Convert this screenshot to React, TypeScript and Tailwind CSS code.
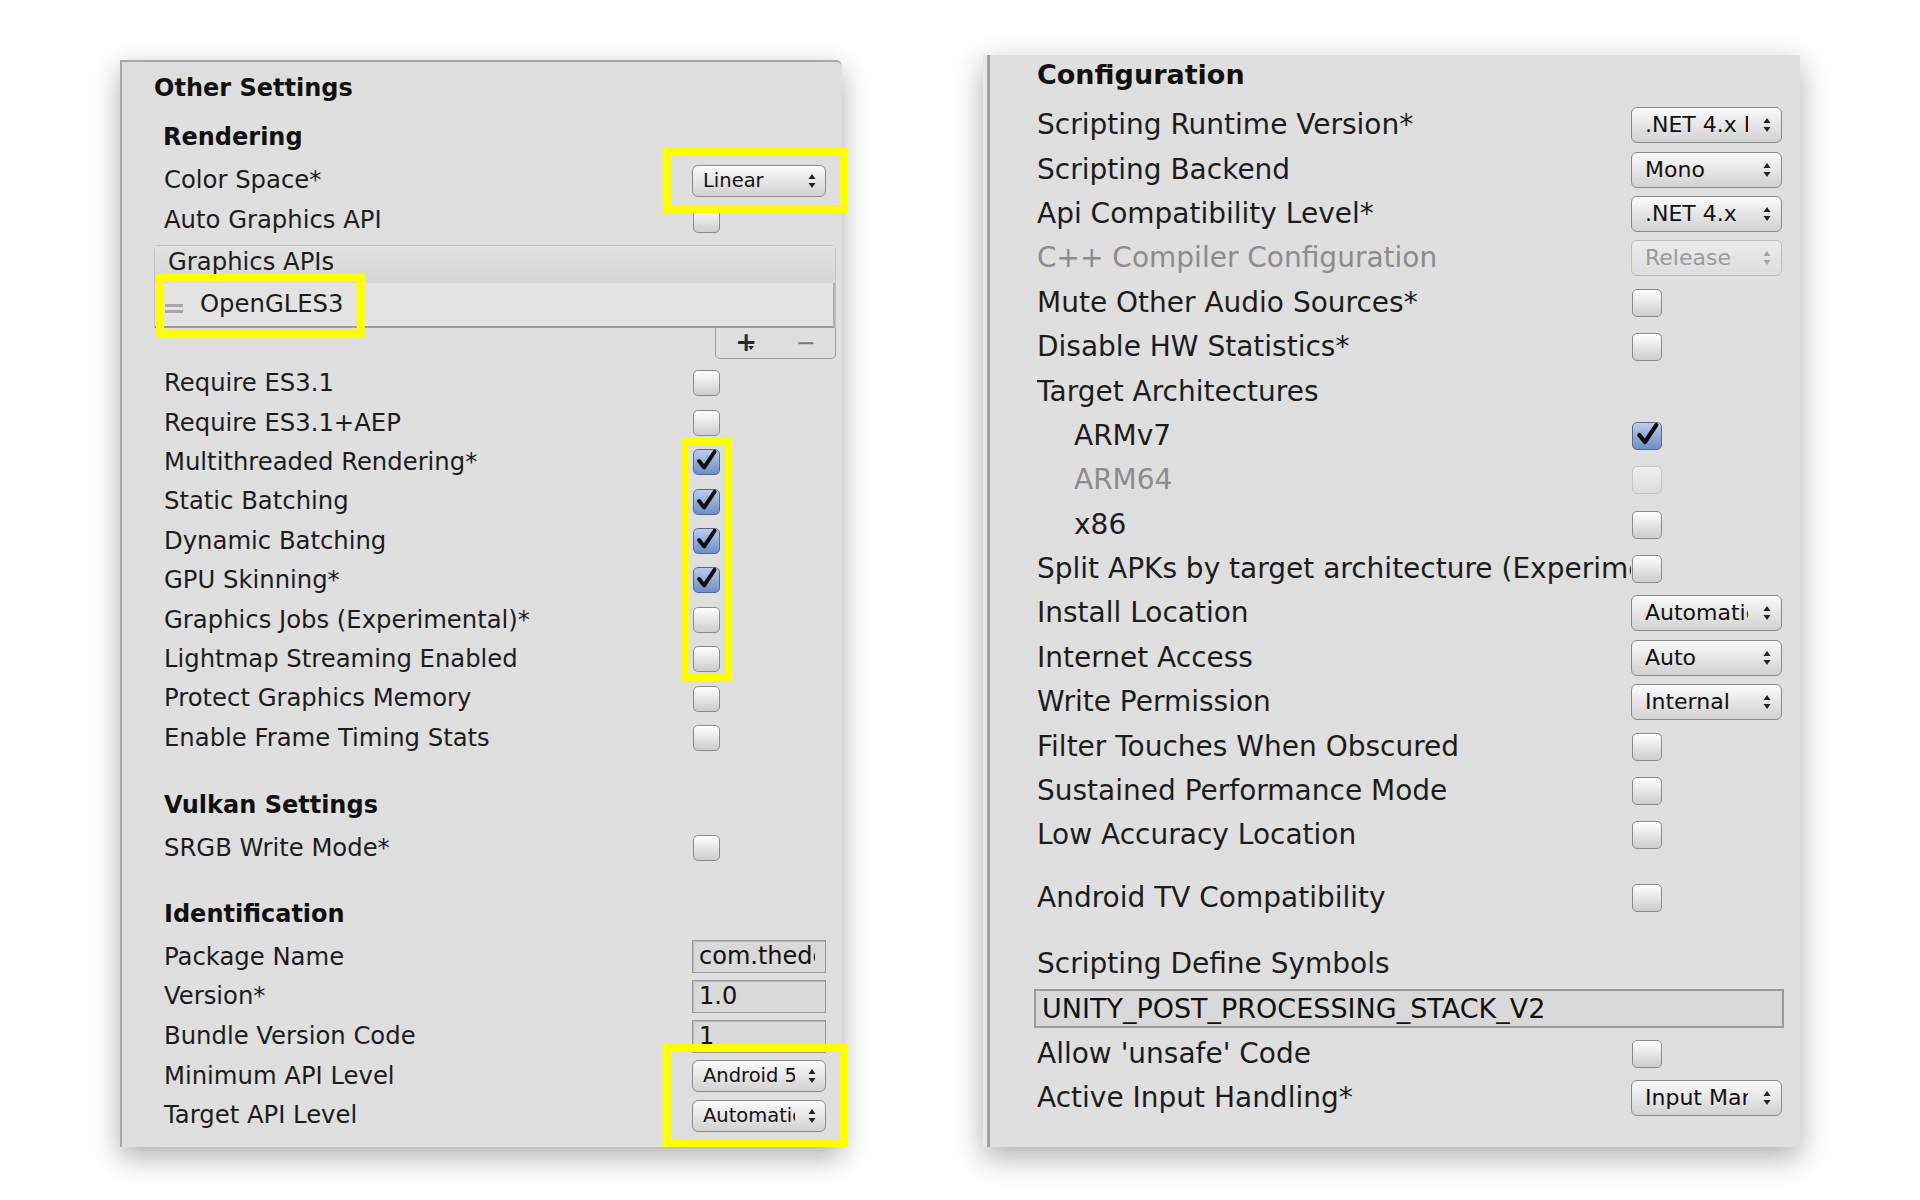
import React from "react"

type Kind = "check" | "checked" | "off" | "drop" | "field" | "none"

type Row = {
  label: string
  kind: Kind
  value?: string
  disabled?: boolean
  indent?: boolean
}

const Arrows = ({ dim }: { dim?: boolean }) => (
  <svg width="8" height="14" viewBox="0 0 8 14" className="shrink-0">
    <path d="M4 0 L7.5 5 L0.5 5 Z" fill={dim ? "#a5a5a5" : "#222"} />
    <path d="M4 14 L7.5 9 L0.5 9 Z" fill={dim ? "#a5a5a5" : "#222"} />
  </svg>
)

const Check = ({ size }: { size: "sm" | "lg" }) => (
  <svg viewBox="0 0 20 20" className={size === "sm" ? "w-[23px] h-[23px] -mt-[3px]" : "w-[25px] h-[25px] -mt-[3px]"}>
    <path d="M3.5 10.5 L8 16 L17 2.5" fill="none" stroke="#0d0d0d" strokeWidth="3.4" strokeLinecap="round" strokeLinejoin="round" />
  </svg>
)

const Checkbox = ({ state, size }: { state: "check" | "checked" | "off"; size: "sm" | "lg" }) => {
  const dims = size === "sm" ? "w-[27px] h-[26px]" : "w-[30px] h-[28px]"
  if (state === "checked") {
    return (
      <div className={`${dims} ml-[1px] rounded-[5px] border border-[#56698c] bg-gradient-to-b from-[#bccdeb] to-[#6e8ec5] flex items-center justify-center`}>
        <Check size={size} />
      </div>
    )
  }
  if (state === "off") {
    return <div className={`${dims} ml-[1px] rounded-[5px] border border-[#c4c4c4] bg-gradient-to-b from-[#f0f0f0] to-[#dcdcdc]`} />
  }
  return <div className={`${dims} ml-[1px] rounded-[5px] border border-[#8a8a8a] bg-gradient-to-b from-white to-[#cdcdcd]`} />
}

const Dropdown = ({ value, size, disabled }: { value: string; size: "sm" | "lg"; disabled?: boolean }) =>
  size === "sm" ? (
    <div className="w-[134px] h-[32px] rounded-[6px] border border-[#8a8a8a] bg-gradient-to-b from-[#fbfbfb] to-[#d2d2d2] flex items-center pl-[10px] text-[19.5px] text-[#111]">
      <span className="w-[92px] overflow-hidden whitespace-nowrap leading-none">{value}</span>
      <span className="flex-1" />
      <span className="mr-[9px] flex">
        <Arrows />
      </span>
    </div>
  ) : (
    <div
      className={`w-[151px] h-[36px] rounded-[6px] border bg-gradient-to-b flex items-center pl-[13px] text-[22px] ${
        disabled ? "border-[#bdbdbd] text-[#9b9b9b] from-[#ececec] to-[#dedede]" : "border-[#8a8a8a] text-[#111] from-[#fbfbfb] to-[#d2d2d2]"
      }`}
    >
      <span className="w-[103px] overflow-hidden whitespace-nowrap leading-none">{value}</span>
      <span className="flex-1" />
      <span className="mr-[10px] flex">
        <Arrows dim={disabled} />
      </span>
    </div>
  )

const TextField = ({ value }: { value: string }) => (
  <div className="w-[134px] h-[33px] border border-[#9a9a9a] shadow-[inset_1px_1px_0_#b5b5b5] bg-[#d9d9d9] pl-[6px] pr-[10px] text-[24px] leading-[31px] text-[#111]">
    <div className="overflow-hidden whitespace-nowrap">{value}</div>
  </div>
)

const leftTop: Row[] = [
  { label: "Color Space*", kind: "drop", value: "Linear" },
  { label: "Auto Graphics API", kind: "check" },
]

const leftMid: Row[] = [
  { label: "Require ES3.1", kind: "check" },
  { label: "Require ES3.1+AEP", kind: "check" },
  { label: "Multithreaded Rendering*", kind: "checked" },
  { label: "Static Batching", kind: "checked" },
  { label: "Dynamic Batching", kind: "checked" },
  { label: "GPU Skinning*", kind: "checked" },
  { label: "Graphics Jobs (Experimental)*", kind: "check" },
  { label: "Lightmap Streaming Enabled", kind: "check" },
  { label: "Protect Graphics Memory", kind: "check" },
  { label: "Enable Frame Timing Stats", kind: "check" },
]

const leftIdent: Row[] = [
  { label: "Package Name", kind: "field", value: "com.thedeveloper" },
  { label: "Version*", kind: "field", value: "1.0" },
  { label: "Bundle Version Code", kind: "field", value: "1" },
  { label: "Minimum API Level", kind: "drop", value: "Android 5.1" },
  { label: "Target API Level", kind: "drop", value: "Automatic (highest installed)" },
]

const rightRows: Row[] = [
  { label: "Scripting Runtime Version*", kind: "drop", value: ".NET 4.x Equivalent" },
  { label: "Scripting Backend", kind: "drop", value: "Mono" },
  { label: "Api Compatibility Level*", kind: "drop", value: ".NET 4.x" },
  { label: "C++ Compiler Configuration", kind: "drop", value: "Release", disabled: true },
  { label: "Mute Other Audio Sources*", kind: "check" },
  { label: "Disable HW Statistics*", kind: "check" },
  { label: "Target Architectures", kind: "none" },
  { label: "ARMv7", kind: "checked", indent: true },
  { label: "ARM64", kind: "off", indent: true, disabled: true },
  { label: "x86", kind: "check", indent: true },
  { label: "Split APKs by target architecture (Experimental)", kind: "check" },
  { label: "Install Location", kind: "drop", value: "Automatic" },
  { label: "Internet Access", kind: "drop", value: "Auto" },
  { label: "Write Permission", kind: "drop", value: "Internal" },
  { label: "Filter Touches When Obscured", kind: "check" },
  { label: "Sustained Performance Mode", kind: "check" },
  { label: "Low Accuracy Location", kind: "check" },
]

const LeftRow = ({ row, h = "h-[39.4px]" }: { row: Row; h?: string }) => (
  <div className={`${h} flex items-center pl-[42px] pr-[16px]`}>
    <span className="flex-1 min-w-0 whitespace-nowrap text-[24.3px] text-[#1c1c1c]">{row.label}</span>
    <div className="w-[134px] flex items-center">
      {row.kind === "drop" && <Dropdown value={row.value ?? ""} size="sm" />}
      {row.kind === "field" && <TextField value={row.value ?? ""} />}
      {(row.kind === "check" || row.kind === "checked") && <Checkbox state={row.kind} size="sm" />}
    </div>
  </div>
)

const RightRow = ({ row }: { row: Row }) => (
  <div className="h-[44.4px] flex items-center pl-[47px] pr-[18px]">
    <span
      className={`flex-1 min-w-0 overflow-hidden whitespace-nowrap text-[28px] ${row.indent ? "pl-[37px]" : ""} ${row.disabled ? "text-[#8c8c8c]" : "text-[#1c1c1c]"}`}
    >
      {row.label}
    </span>
    <div className="w-[151px] shrink-0 flex items-center">
      {row.kind === "drop" && <Dropdown value={row.value ?? ""} size="lg" disabled={row.disabled} />}
      {row.kind !== "drop" && row.kind !== "none" && row.kind !== "field" && <Checkbox state={row.kind} size="lg" />}
    </div>
  </div>
)

const Heading = ({ text, size, className }: { text: string; size: string; className?: string }) => (
  <div className={`h-[40px] flex items-center font-bold text-[#111] ${size} ${className ?? ""}`}>{text}</div>
)

const LeftPanel = () => (
  <div className="ml-[120px] mt-[60px] w-[722px] h-[1087px] shrink-0 bg-[#dfdfdf] border-l-2 border-t-2 border-[#a9a9a9] rounded-tr-[6px] shadow-[0_10px_28px_rgba(0,0,0,0.32)] pt-[6px] flex flex-col">
    <Heading text="Other Settings" size="text-[24px]" className="pl-[32px]" />
    <Heading text="Rendering" size="text-[24px]" className="pl-[41px] mt-[9px]" />
    <div className="mt-[4px]">
      {leftTop.map((r) => (
        <LeftRow key={r.label} row={r} />
      ))}
    </div>

    {/* Graphics APIs reorderable list */}
    <div className="mt-[5px] ml-[32px] mr-[6px] flex flex-col">
      <div className="rounded-t-[5px] border border-[#c2c2c2] border-b-0 shadow-[inset_0_1px_0_#f4f4f4]">
        <div className="h-[37px] bg-gradient-to-b from-[#e2e2e2] to-[#d7d7d7] flex items-center pb-[5px] pl-[13px] text-[24.3px] text-[#1c1c1c]">
          Graphics APIs
        </div>
        <div className="h-[45px] bg-[#e3e3e3] flex items-center border-r-2 border-[#b0b0b0] border-b-2 border-b-[#9c9c9c]">
          <div className="ml-[10px] mt-[8px] w-[18px] flex flex-col gap-[3px]">
            <div className="h-[3px] bg-[#a8a8a8]" />
            <div className="h-[3px] bg-[#a8a8a8]" />
          </div>
          <span className="ml-[17px] text-[24.3px] text-[#1c1c1c]">OpenGLES3</span>
        </div>
      </div>
      <div className="self-end w-[121px] h-[31px] border border-t-0 border-[#9c9c9c] rounded-b-[5px] bg-[#dfdfdf] flex items-center justify-around text-[#2a2a2a]">
        <span className="relative text-[26px] font-bold leading-none -mt-[2px]">
          +
          <svg width="6" height="4" viewBox="0 0 6 4" className="absolute left-[13px] top-[17px]">
            <path d="M0 0 L6 0 L3 4 Z" fill="#2a2a2a" />
          </svg>
        </span>
        <span className="text-[24px] leading-none text-[#7a7a7a]">−</span>
      </div>
    </div>

    <div className="mt-[5px]">
      {leftMid.map((r) => (
        <LeftRow key={r.label} row={r} />
      ))}
    </div>

    <Heading text="Vulkan Settings" size="text-[24px]" className="pl-[42px] mt-[27px]" />
    <div className="mt-[4px]">
      <LeftRow row={{ label: "SRGB Write Mode*", kind: "check" }} />
    </div>

    <Heading text="Identification" size="text-[24px]" className="pl-[42px] mt-[26px]" />
    <div className="mt-[3px]">
      {leftIdent.map((r) => (
        <LeftRow key={r.label} row={r} h="h-[39.7px]" />
      ))}
    </div>
  </div>
)

const RightPanel = () => (
  <div className="ml-[141px] mt-[55px] w-[817px] h-[1092px] shrink-0 bg-[#dfdfdf] shadow-[0_10px_28px_rgba(0,0,0,0.32)] flex">
    <div className="w-[4px] shrink-0 bg-[#e8e8e8]" />
    <div className="w-[3px] shrink-0 bg-[#a2a2a2]" />
    <div className="flex-1 min-w-0 flex flex-col">
      <Heading text="Configuration" size="text-[27px]" className="pl-[47px]" />
      <div className="mt-[8px]">
        {rightRows.map((r) => (
          <RightRow key={r.label} row={r} />
        ))}
      </div>
      <div className="mt-[18px]">
        <RightRow row={{ label: "Android TV Compatibility", kind: "check" }} />
      </div>
      <div className="mt-[22px] h-[44.4px] flex items-center pl-[47px] text-[28px] text-[#1c1c1c]">Scripting Define Symbols</div>
      <div className="mt-[3px] ml-[44px] mr-[16px] h-[39px] border-2 border-[#9a9a9a] bg-[#d9d9d9] pl-[6px] flex items-center text-[27px] text-[#111] whitespace-nowrap overflow-hidden">
        UNITY_POST_PROCESSING_STACK_V2
      </div>
      <div className="mt-[3px]">
        <RightRow row={{ label: "Allow 'unsafe' Code", kind: "check" }} />
        <RightRow row={{ label: "Active Input Handling*", kind: "drop", value: "Input Manager" }} />
      </div>
    </div>
  </div>
)

export default function App() {
  return (
    <div className="relative w-[1920px] h-[1200px] bg-white flex items-start overflow-hidden font-['DejaVu_Sans',sans-serif]">
      <LeftPanel />
      <RightPanel />

      {/* yellow highlight frames drawn over the panels */}
      <div className="absolute left-[663px] top-[148px] w-[185px] h-[65px] border-[8px] border-[#ffff00]" />
      <div className="absolute left-[156px] top-[274px] w-[209px] h-[63px] border-[8px] border-[#ffff00]" />
      <div className="absolute left-[682px] top-[438px] w-[50px] h-[243px] border-[7px] border-[#ffff00]" />
      <div className="absolute left-[663px] top-[1044px] w-[185px] h-[103px] border-[8px] border-[#ffff00]" />
    </div>
  )
}
